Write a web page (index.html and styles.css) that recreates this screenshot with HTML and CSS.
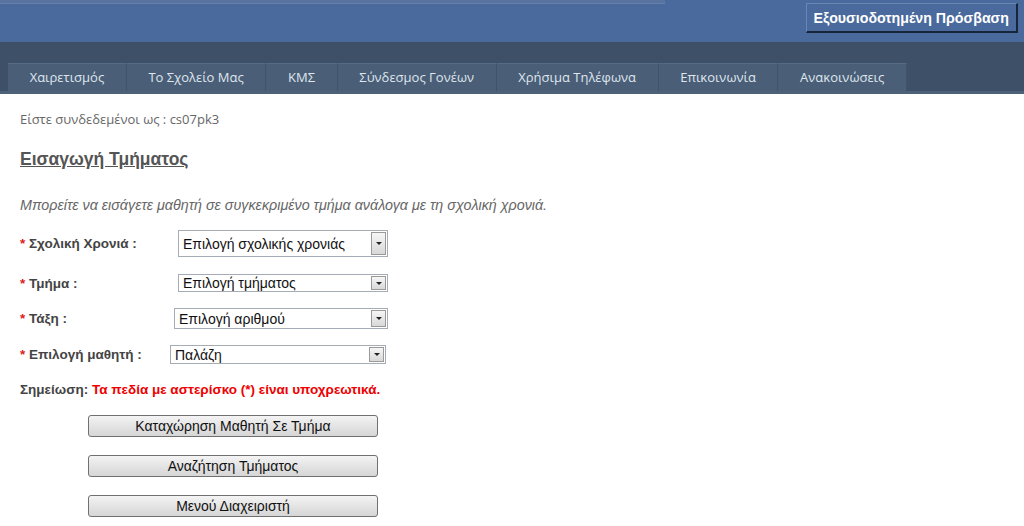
FILE: index.html
```html
<!DOCTYPE html>
<html lang="el">
<head>
  <meta charset="UTF-8" />
  <title>Εισαγωγή Τμήματος</title>
  <link rel="stylesheet" href="styles.css">
</head>
<body>

  <header class="site-header">
    <div class="header-top">
      <div class="top-strip"></div>
      <button class="login-btn">Εξουσιοδοτημένη Πρόσβαση</button>
    </div>
    <nav class="main-nav">
      <a href="#">Χαιρετισμός</a>
      <a href="#">Το Σχολείο Μας</a>
      <a href="#">ΚΜΣ</a>
      <a href="#">Σύνδεσμος Γονέων</a>
      <a href="#">Χρήσιμα Τηλέφωνα</a>
      <a href="#">Επικοινωνία</a>
      <a href="#">Ανακοινώσεις</a>
    </nav>
  </header>

  <main class="content">
    <p class="logged-in">Είστε συνδεδεμένοι ως : cs07pk3</p>

    <h2 class="page-title">Εισαγωγή Τμήματος</h2>

    <p class="intro">Μπορείτε να εισάγετε μαθητή σε συγκεκριμένο τμήμα ανάλογα με τη σχολική χρονιά.</p>

    <form class="class-form">
      <div class="form-row row-year">
        <label><span class="req">*</span> Σχολική Χρονιά :</label>
        <div class="select-box">
          <span class="select-text">Επιλογή σχολικής χρονιάς</span>
          <span class="select-btn"></span>
        </div>
      </div>

      <div class="form-row row-section">
        <label><span class="req">*</span> Τμήμα :</label>
        <div class="select-box">
          <span class="select-text">Επιλογή τμήματος</span>
          <span class="select-btn"></span>
        </div>
      </div>

      <div class="form-row row-grade">
        <label><span class="req">*</span> Τάξη :</label>
        <div class="select-box">
          <span class="select-text">Επιλογή αριθμού</span>
          <span class="select-btn"></span>
        </div>
      </div>

      <div class="form-row row-student">
        <label><span class="req">*</span> Επιλογή μαθητή :</label>
        <div class="select-box">
          <span class="select-text">Παλάζη</span>
          <span class="select-btn"></span>
        </div>
      </div>

      <p class="note">Σημείωση: <span class="note-red">Τα πεδία με αστερίσκο (*) είναι υποχρεωτικά.</span></p>

      <div class="actions">
        <button type="button" class="form-btn">Καταχώρηση Μαθητή Σε Τμήμα</button>
        <button type="button" class="form-btn">Αναζήτηση Τμήματος</button>
        <button type="button" class="form-btn">Μενού Διαχειριστή</button>
      </div>
    </form>
  </main>

</body>
</html>
```

FILE: styles.css
```css
body {
  margin: 0;
  font-family: "Liberation Sans", Arial, sans-serif;
  background: #fff;
  color: #333;
}

/* header */
.site-header {
  background: #3e5067;
  border-bottom: 3px solid #4d6179;
}

.header-top {
  height: 42px;
  background: #4a699c;
  position: relative;
  display: flex;
  justify-content: flex-end;
  align-items: flex-start;
}

.top-strip {
  position: absolute;
  left: 0;
  top: 0;
  width: 665px;
  height: 3px;
  background: #5873a0;
  border-bottom: 1px solid #6680aa;
}

.login-btn {
  margin: 3px 6px 0 0;
  height: 30px;
  padding: 0 7px;
  background: #4a699c;
  color: #fff;
  font-family: "Liberation Sans", Arial, sans-serif;
  font-size: 14.2px;
  font-weight: bold;
  border: 1px solid #6a86b4;
  border-right: 2px solid #17253a;
  border-bottom: 2px solid #17253a;
  cursor: pointer;
}

.main-nav {
  display: flex;
  margin: 0 0 0 8px;
  padding-top: 21px;
  width: 899px;
}

.main-nav a {
  display: block;
  height: 27px;
  line-height: 27px;
  padding: 0 20px;
  background: #4a5e77;
  border-top: 1px solid #566b85;
  border-right: 1px solid #41536a;
  color: #dfe6ee;
  font-family: "Open Sans", sans-serif;
  font-size: 13px;
  text-decoration: none;
  text-align: center;
  flex: auto;
}

/* content */
.content {
  padding: 0 20px;
}

.logged-in {
  margin: 16px 0 0;
  font-family: "Open Sans", sans-serif;
  font-size: 13px;
  color: #666;
}

.page-title {
  margin: 21px 0 0;
  font-size: 17.5px;
  color: #555;
  text-decoration: underline;
}

.intro {
  margin: 27px 0 0;
  font-size: 14.3px;
  font-style: italic;
  color: #666;
}

.class-form {
  margin-top: 17px;
}

.form-row {
  display: flex;
  align-items: center;
}

.form-row label {
  width: 158px;
  font-size: 13.5px;
  font-weight: bold;
  color: #444;
}

.req {
  color: #d22;
}

.select-box {
  display: flex;
  align-items: center;
  width: 208px;
  border: 1px solid #a5acb5;
  background: #fff;
  font-size: 14px;
  color: #111;
}

.select-text {
  flex: 1;
  padding-left: 4px;
}

.select-btn {
  width: 13px;
  height: 15px;
  margin: 1px;
  border: 1px solid #9a9a9a;
  background: linear-gradient(#f6f6f6, #d8d8d8);
  position: relative;
}

.select-btn::after {
  content: "";
  position: absolute;
  left: 4px;
  top: 6px;
  border-left: 3px solid transparent;
  border-right: 3px solid transparent;
  border-top: 3px solid #222;
}

.row-year {
  margin-top: 11px;
}

.row-year .select-box {
  height: 25px;
}

.row-year .select-btn {
  height: 21px;
}

.row-year .select-btn::after {
  top: 9px;
}

.row-section {
  margin-top: 17px;
}

.row-section .select-box {
  height: 16px;
}

.row-section .select-btn::after {
  top: 5px;
}

.row-section .select-btn {
  height: 12px;
}

.row-grade {
  margin-top: 16px;
}

.row-grade label {
  width: 154px;
}

.row-grade .select-box {
  width: 212px;
  height: 19px;
}

.row-student {
  margin-top: 16px;
}

.row-student label {
  width: 150px;
}

.row-student .select-box {
  width: 214px;
  height: 17px;
}

.row-student .select-btn {
  height: 13px;
}

.row-student .select-btn::after {
  top: 5px;
}

.note {
  margin: 18px 0 0;
  font-size: 13.5px;
  font-weight: bold;
  color: #444;
}

.note-red {
  color: #e00;
}

.actions {
  display: flex;
  flex-direction: column;
  align-items: flex-start;
  gap: 18px;
  margin: 18px 0 0 68px;
}

.form-btn {
  width: 290px;
  height: 22px;
  padding: 0;
  background: linear-gradient(#f4f4f4, #e4e4e4 50%, #d6d6d6);
  border: 1px solid #707070;
  border-radius: 3px;
  font-family: "Liberation Sans", Arial, sans-serif;
  font-size: 14px;
  color: #111;
  cursor: pointer;
}
```
